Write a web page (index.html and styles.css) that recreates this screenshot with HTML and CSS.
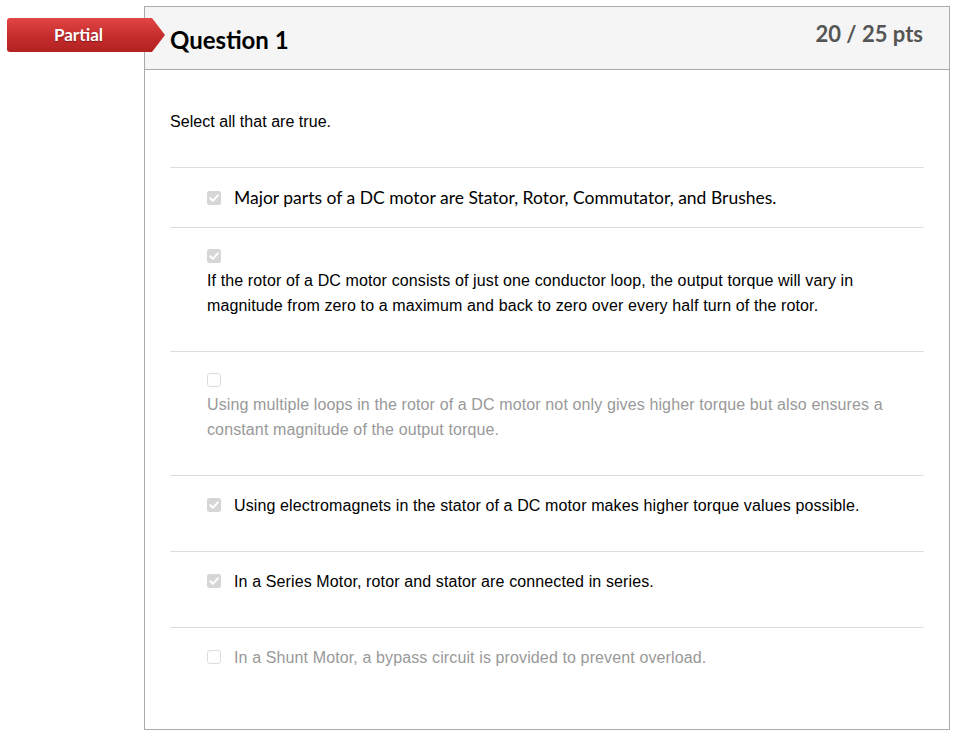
FILE: index.html
```html
<!DOCTYPE html>
<html lang="en">
<head>
<meta charset="utf-8">
<title>Question 1</title>
<link rel="stylesheet" href="styles.css">
</head>
<body>
<div class="page">
  <div class="question">
    <div class="badge">Partial</div>
    <div class="q-header">
      <h2 class="q-title">Question 1</h2>
      <div class="q-points">20 / 25 pts</div>
    </div>
    <div class="q-body">
      <p class="q-text">Select all that are true.</p>
      <div class="answers">
        <div class="answer answer-lato">
          <span class="check checked"><svg viewBox="0 0 14 14" width="14" height="14"><rect x="0" y="0" width="14" height="14" rx="2.5" fill="#d6d6d6"/><path d="M3.3 7.3 L5.9 9.8 L10.8 4.3" fill="none" stroke="#fff" stroke-width="2" stroke-linecap="round" stroke-linejoin="round"/></svg></span><span class="label">Major parts of a DC motor are Stator, Rotor, Commutator, and Brushes.</span>
        </div>
        <div class="answer stacked">
          <span class="check checked"><svg viewBox="0 0 14 14" width="14" height="14"><rect x="0" y="0" width="14" height="14" rx="2.5" fill="#d6d6d6"/><path d="M3.3 7.3 L5.9 9.8 L10.8 4.3" fill="none" stroke="#fff" stroke-width="2" stroke-linecap="round" stroke-linejoin="round"/></svg></span>
          <p class="label">If the rotor of a DC motor consists of just one conductor loop, the output torque will vary in magnitude from zero to a maximum and back to zero over every half turn of the rotor.</p>
        </div>
        <div class="answer stacked unselected">
          <span class="check"><svg viewBox="0 0 14 14" width="14" height="14"><rect x="0.5" y="0.5" width="13" height="13" rx="2.5" fill="#fff" stroke="#dcdcdc"/></svg></span>
          <p class="label">Using multiple loops in the rotor of a DC motor not only gives higher torque but also ensures a constant magnitude of the output torque.</p>
        </div>
        <div class="answer">
          <span class="check checked"><svg viewBox="0 0 14 14" width="14" height="14"><rect x="0" y="0" width="14" height="14" rx="2.5" fill="#d6d6d6"/><path d="M3.3 7.3 L5.9 9.8 L10.8 4.3" fill="none" stroke="#fff" stroke-width="2" stroke-linecap="round" stroke-linejoin="round"/></svg></span><span class="label">Using electromagnets in the stator of a DC motor makes higher torque values possible.</span>
        </div>
        <div class="answer">
          <span class="check checked"><svg viewBox="0 0 14 14" width="14" height="14"><rect x="0" y="0" width="14" height="14" rx="2.5" fill="#d6d6d6"/><path d="M3.3 7.3 L5.9 9.8 L10.8 4.3" fill="none" stroke="#fff" stroke-width="2" stroke-linecap="round" stroke-linejoin="round"/></svg></span><span class="label">In a Series Motor, rotor and stator are connected in series.</span>
        </div>
        <div class="answer unselected">
          <span class="check"><svg viewBox="0 0 14 14" width="14" height="14"><rect x="0.5" y="0.5" width="13" height="13" rx="2.5" fill="#fff" stroke="#dcdcdc"/></svg></span><span class="label">In a Shunt Motor, a bypass circuit is provided to prevent overload.</span>
        </div>
      </div>
    </div>
  </div>
</div>
</body>
</html>
```

FILE: styles.css
```css
* { box-sizing: border-box; }
html, body { margin: 0; padding: 0; background: #fff; }
body { font-family: "Liberation Sans", Arial, sans-serif; color: #000; }

.page { padding: 6px 3px 0 144px; }

.question {
  position: relative;
  width: 806px;
  border: 1px solid #aaa;
  background: #fff;
}

.badge {
  position: absolute;
  left: -138px;
  top: 11px;
  width: 158px;
  height: 34px;
  display: flex;
  align-items: center;
  justify-content: center;
  padding-right: 15px;
  padding-bottom: 2px;
  font-family: Lato, "Liberation Sans", sans-serif;
  font-weight: 700;
  font-size: 17px;
  color: #fff;
  text-shadow: 0 1px 1px rgba(0,0,0,0.35);
  background: linear-gradient(#e24545, #c22a2a 60%, #b32222);
  clip-path: polygon(0 0, calc(100% - 13px) 0, 100% 50%, calc(100% - 13px) 100%, 0 100%);
  border-radius: 3px 0 0 3px;
}

.q-header {
  height: 63px;
  background: #f5f5f5;
  border-bottom: 1px solid #aaa;
  display: flex;
  justify-content: space-between;
  align-items: flex-start;
  padding: 0 26px 0 25px;
  font-family: Lato, "Liberation Sans", sans-serif;
  font-weight: 700;
}

.q-title {
  margin: 0;
  padding-top: 18px;
  font-size: 24px;
  line-height: 30px;
  font-weight: 700;
  color: #000;
}

.q-points {
  padding-top: 13px;
  font-size: 22px;
  line-height: 28px;
  color: #555;
}

.q-body { padding: 39px 25px 26px 25px; }

.q-text {
  margin: 0 0 33px;
  font-size: 16px;
  line-height: 25px;
  letter-spacing: 0.04px;
}

.answer {
  border-top: 1px solid #ddd;
  padding: 17px 0 33px 37px;
  font-size: 16px;
  line-height: 25px;
  letter-spacing: 0.12px;
  color: #000;
}

.answer-lato {
  padding-bottom: 16px;
  line-height: 26px;
  font-family: Lato, "Liberation Sans", sans-serif;
  font-size: 17.5px;
  letter-spacing: 0;
}

.answer.stacked { padding-top: 16px; }

.check {
  display: inline-block;
  width: 14px;
  height: 14px;
  margin-right: 13px;
  vertical-align: -1px;
}
.check svg { display: block; }

.stacked .check {
  display: block;
  margin: 5px 0 5px;
}

.answer p.label { margin: 0; }

.unselected { color: #999; }
```
